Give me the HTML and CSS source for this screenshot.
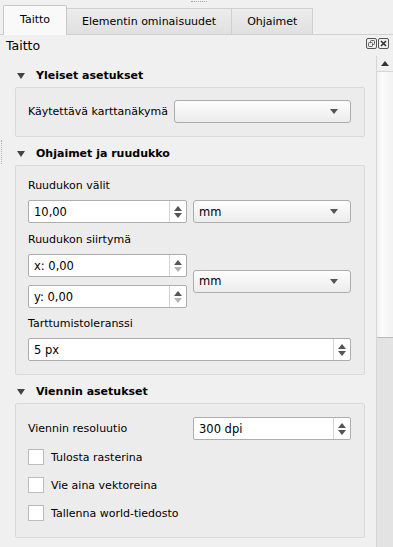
FILE: index.html
```html
<!DOCTYPE html>
<html lang="fi">
<head>
  <meta charset="UTF-8">
  <title>Taitto</title>
  <link rel="stylesheet" href="styles.css">
</head>
<body>
  <div class="tabbar">
    <div class="tab active">Taitto</div>
    <div class="tab">Elementin ominaisuudet</div>
    <div class="tab">Ohjaimet</div>
  </div>

  <div class="dock-title">
    <span>Taitto</span>
    <svg class="dock-buttons" width="23" height="11" viewBox="0 0 23 11">
      <rect x="0.5" y="0.5" width="10" height="10" rx="1.5" fill="none" stroke="#555"/>
      <rect x="4.5" y="2.5" width="4" height="4" rx="1" fill="none" stroke="#555"/>
      <rect x="2.5" y="4.5" width="4" height="4" rx="1" fill="#f0f0f0" stroke="#555"/>
      <rect x="12.5" y="0.5" width="10" height="10" rx="1.5" fill="none" stroke="#555"/>
      <path d="M15 3 L20 8 M20 3 L15 8" stroke="#333" stroke-width="1.6"/>
    </svg>
  </div>

  <div class="dock-body">
    <div class="panel">
      <div class="section-head"><span class="arrow"></span>Yleiset asetukset</div>
      <div class="group">
        <div class="map-row">
          <span class="label">Käytettävä karttanäkymä</span>
          <div class="combo map-combo"><span></span><i class="drop"></i></div>
        </div>
      </div>

      <div class="section-head"><span class="arrow"></span>Ohjaimet ja ruudukko</div>
      <div class="group">
        <div class="label">Ruudukon välit</div>
        <div class="pair">
          <div class="spin"><span>10,00</span><span class="spin-btns"><i class="up"></i><i class="down"></i></span></div>
          <div class="combo"><span>mm</span><i class="drop"></i></div>
        </div>

        <div class="label gap-top">Ruudukon siirtymä</div>
        <div class="pair">
          <div class="stack">
            <div class="spin"><span>x: 0,00</span><span class="spin-btns"><i class="up"></i><i class="down off"></i></span></div>
            <div class="spin"><span>y: 0,00</span><span class="spin-btns"><i class="up"></i><i class="down off"></i></span></div>
          </div>
          <div class="combo"><span>mm</span><i class="drop"></i></div>
        </div>

        <div class="label gap-top-small">Tarttumistoleranssi</div>
        <div class="spin"><span>5 px</span><span class="spin-btns"><i class="up"></i><i class="down"></i></span></div>
      </div>

      <div class="section-head"><span class="arrow"></span>Viennin asetukset</div>
      <div class="group export">
        <div class="pair">
          <span class="label">Viennin resoluutio</span>
          <div class="spin"><span>300 dpi</span><span class="spin-btns"><i class="up"></i><i class="down"></i></span></div>
        </div>
        <div class="checks">
          <label class="check"><span class="box"></span>Tulosta rasterina</label>
          <label class="check"><span class="box"></span>Vie aina vektoreina</label>
          <label class="check"><span class="box"></span>Tallenna world-tiedosto</label>
        </div>
      </div>
    </div>

    <div class="scrollbar">
      <div class="scroll-btn"><i class="up"></i></div>
      <div class="scroll-thumb"></div>
      <div class="scroll-track"></div>
    </div>
  </div>
</body>
</html>
```

FILE: styles.css
```css
/* Basic Reset */
* {
  box-sizing: border-box;
  margin: 0;
  padding: 0;
}
body {
  width: 393px;
  height: 547px;
  overflow: hidden;
  background-color: #f0f0f0;
  color: #000;
  font-family: "DejaVu Sans", sans-serif;
  font-size: 11px;
}
/* Tabs */
.tabbar {
  position: relative;
  display: flex;
  align-items: flex-end;
  height: 35px;
  padding-left: 3px;
  border-bottom: 1px solid #d0d0d0;
}
.tabbar::before {
  content: "";
  position: absolute;
  left: 191px;
  top: 1px;
  width: 16px;
  border-top: 1px dotted #a8a8a8;
}
.tab {
  height: 26px;
  line-height: 25px;
  padding: 0 15px;
  margin-left: -1px;
  border: 1px solid #d0d0d0;
  border-bottom: none;
  background: linear-gradient(#ececec, #e0e0e0);
}
.tab.active {
  height: 30px;
  line-height: 28px;
  margin-left: 0;
  margin-bottom: -1px;
  padding: 0 16px;
  border-color: #c8c8c8;
  border-radius: 2px 2px 0 0;
  background: #f9f9f9;
  z-index: 1;
}
/* Dock title */
.dock-title {
  display: flex;
  justify-content: space-between;
  align-items: center;
  height: 21px;
  padding: 0 4px 0 6px;
  font-size: 12.5px;
}
.dock-buttons {
  margin-top: -4px;
}
/* Dock body */
.dock-body {
  display: flex;
  height: 491px;
}
.panel {
  position: relative;
  flex: 1;
  padding: 3px 11px 0 15px;
}
.panel::before {
  content: "";
  position: absolute;
  left: 1px;
  top: 84px;
  height: 24px;
  border-left: 1px dotted #b0b0b0;
}
.section-head {
  display: flex;
  align-items: center;
  height: 24px;
  margin-top: 4px;
  font-weight: bold;
}
.section-head:first-child {
  margin-top: 4px;
}
.arrow {
  width: 0;
  height: 0;
  margin: 1px 11px 0 2px;
  border-left: 4px solid transparent;
  border-right: 4px solid transparent;
  border-top: 6px solid #444;
}
.group {
  padding: 12px 13px 13px 12px;
  background-color: #ececec;
  border: 1px solid #d9d9d9;
  border-radius: 2px;
}
.label {
  display: block;
  height: 16px;
  line-height: 16px;
  margin-bottom: 6px;
}
.gap-top {
  margin-top: 9px;
}
.gap-top-small {
  margin-top: 8px;
}
.map-row {
  display: flex;
  justify-content: space-between;
  align-items: center;
}
.map-row .label {
  margin-bottom: 0;
}
.map-combo {
  width: 177px;
}
.pair {
  display: grid;
  grid-template-columns: 159px 1fr;
  column-gap: 6px;
  align-items: center;
}
.pair .label {
  margin-bottom: 0;
}
.stack {
  display: flex;
  flex-direction: column;
  gap: 8px;
}
/* Inputs */
.spin,
.combo {
  display: flex;
  align-items: center;
  justify-content: space-between;
  height: 23px;
  border: 1px solid #adadad;
}
.spin {
  background-color: #fff;
  border-radius: 2px;
  padding-left: 5px;
  font-size: 11.5px;
}
.combo {
  padding: 0 12px 0 5px;
  border-radius: 3px;
  background: linear-gradient(#fdfdfd, #ececec);
  font-size: 11.5px;
}
.drop {
  border-left: 4px solid transparent;
  border-right: 4px solid transparent;
  border-top: 5px solid #555;
}
.spin-btns {
  display: flex;
  flex-direction: column;
  align-items: center;
  justify-content: center;
  gap: 2px;
  width: 17px;
  height: 100%;
  border-left: 1px solid #d4d4d4;
}
.up,
.down {
  display: block;
  border-left: 4px solid transparent;
  border-right: 4px solid transparent;
}
.up {
  border-bottom: 5px solid #555;
}
.down {
  border-top: 5px solid #555;
}
.down.off {
  border-top-color: #b4b4b4;
}
/* Export group */
.export {
  padding-top: 13px;
  padding-bottom: 14px;
}
.checks {
  display: flex;
  flex-direction: column;
  gap: 8px;
  margin-top: 7px;
}
.check {
  display: flex;
  align-items: center;
  gap: 7px;
  height: 20px;
}
.box {
  width: 16px;
  height: 16px;
  background-color: #fff;
  border: 1px solid #bdbdbd;
}
/* Scrollbar */
.scrollbar {
  display: flex;
  flex-direction: column;
  width: 17px;
  border-left: 1px solid #d6d6d6;
}
.scroll-btn {
  display: flex;
  align-items: center;
  justify-content: center;
  height: 16px;
  border-bottom: 1px solid #d6d6d6;
}
.scroll-btn .up {
  border-bottom-color: #333;
}
.scroll-thumb {
  height: 266px;
  background: linear-gradient(to right, #f0f0f0, #fcfcfc 30%, #f2f2f2);
  border-bottom: 1px solid #bcbcbc;
}
.scroll-track {
  flex: 1;
  background-color: #e3e3e3;
}
```
